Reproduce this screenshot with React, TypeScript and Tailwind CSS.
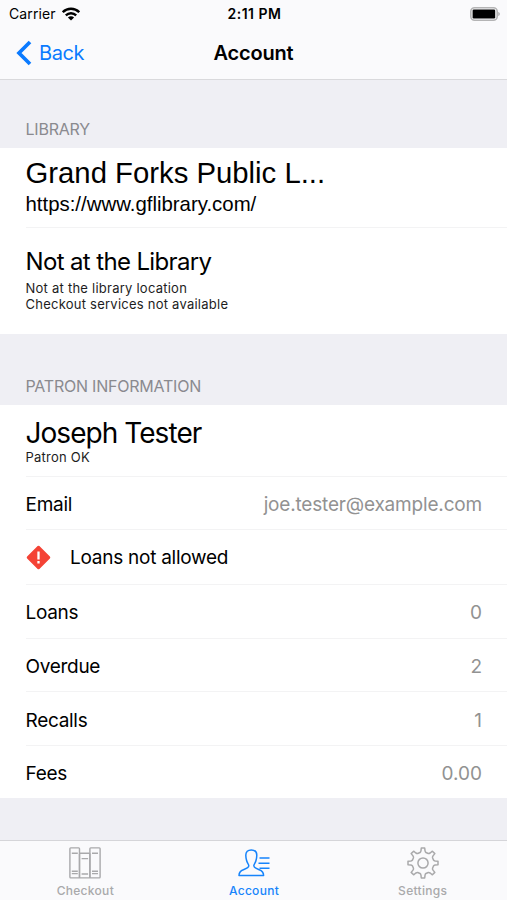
import type { ReactNode } from "react"

const counts = [
  { label: "Loans", value: "0", className: "h-[54px] pt-[3px]" },
  { label: "Overdue", value: "2", className: "h-[53px] pt-[5px]" },
  { label: "Recalls", value: "1", className: "h-[54px] pt-[5px]" },
  { label: "Fees", value: "0.00", className: "h-[52px] pt-[5px]" },
]

function WifiIcon() {
  return (
    <svg width="18" height="14" viewBox="0 0 18 14" fill="none" stroke="#000" strokeWidth="2.3">
      <path d="M.8 5.2C5.4.6 12.6.6 17.2 5.2" />
      <path d="M3.8 8.4c2.9-2.9 7.5-2.9 10.4 0" />
      <path d="M9 13.6 5.9 10.5c1.7-1.6 4.5-1.6 6.2 0Z" fill="#000" stroke="none" />
    </svg>
  )
}

function BatteryIcon() {
  return (
    <svg width="30" height="14" viewBox="0 0 30 14">
      <rect x=".8" y=".8" width="26.4" height="12.4" rx="3.8" fill="#fbfbfc" stroke="#b4b4b5" strokeWidth="1.6" />
      <rect x="2.6" y="2.6" width="22.6" height="8.8" rx="1.2" fill="#000" />
      <path d="M28.2 5v4c1.1-.3 1.7-1.1 1.7-2s-.6-1.7-1.7-2Z" fill="#b4b4b5" />
    </svg>
  )
}

function BooksIcon() {
  return (
    <svg width="32" height="32" viewBox="0 0 32 32" fill="none" stroke="currentColor" strokeWidth="1.4">
      <rect x=".9" y=".9" width="9.6" height="30" rx=".8" />
      <rect x="10.5" y="6.3" width="10.4" height="24.6" rx=".8" />
      <rect x="20.9" y=".9" width="10.2" height="30" rx=".8" />
      <path d="M2.8 6.3h6M2.8 24.3h6M2.8 26.6h6M12.6 11.6h6.5M12.6 27h6.5M23 6.3h6M23 24.3h6M23 26.6h6" />
    </svg>
  )
}

function PersonIcon() {
  return (
    <svg width="32" height="32" viewBox="0 0 32 32" fill="none" stroke="currentColor" strokeWidth="1.5">
      <path
        strokeLinejoin="round"
        d="M1 28.6C1 25 2.2 23.8 5.4 22.7C8.8 21.5 10.8 20.8 10.8 18.8C10.8 17 9.2 16.300 8.600 13.500C8.100 11.500 7.800 10 7.800 8.200C7.800 4.800 9.800 2.900 13.300 2.900S18.800 4.800 18.800 8.200C18.800 10 18.500 11.500 18 13.500C17.400 16.300 15.800 17 15.800 18.800C15.800 20.800 17.800 21.500 21.200 22.700C24.400 23.800 25.600 25 25.600 28.600Z"
      />
      <path d="M21.5 11h10M20.5 16.2h11M21.5 21.3h10" />
    </svg>
  )
}

function gearPath() {
  const point = (radius: number, degrees: number) => {
    const a = (degrees * Math.PI) / 180
    return `${(16 + radius * Math.sin(a)).toFixed(2)} ${(16 - radius * Math.cos(a)).toFixed(2)}`
  }
  let d = ""
  for (let i = 0; i < 8; i++) {
    const a = i * 45
    d += `${i === 0 ? "M" : "L"}${point(15.1, a - 6.5)}L${point(15.1, a + 6.5)}`
    d += `L${point(12.3, a + 9.5)}Q${point(11.2, a + 12)} ${point(10.9, a + 16)}`
    d += `L${point(10.9, a + 29)}Q${point(11.2, a + 33)} ${point(12.3, a + 35.5)}`
  }
  return d + "Z"
}

function GearIcon() {
  return (
    <svg width="32" height="32" viewBox="0 0 32 32" fill="none" stroke="currentColor" strokeWidth="1.5" strokeLinejoin="round">
      <path d={gearPath()} />
      <circle cx="16" cy="16" r="5.1" />
    </svg>
  )
}

function Tab({ icon, label, active }: { icon: ReactNode; label: string; active?: boolean }) {
  return (
    <div className={`flex flex-1 flex-col items-center pt-1.5 ${active ? "text-[#1684fb]" : "text-[#a9a9ab]"}`}>
      {icon}
      <span className="mt-1 text-[12px] leading-4 font-medium tracking-[0.3px]">{label}</span>
    </div>
  )
}

export default function App() {
  return (
    <div className="flex h-[900px] w-[507px] flex-col overflow-hidden bg-[#efeff4] font-['Inter',sans-serif] text-black">
      <header className="h-20 border-b border-[#d9d9dc] bg-[#fafafc]">
        <div className="grid h-[27px] grid-cols-3 items-center pr-[7px] pl-[9px]">
          <div className="flex items-center gap-1.5 text-[14px] tracking-[0.1px]">
            <span>Carrier</span>
            <WifiIcon />
          </div>
          <div className="text-center text-[14px] font-semibold tracking-[0.5px]">2:11 PM</div>
          <div className="flex justify-end">
            <BatteryIcon />
          </div>
        </div>
        <div className="grid h-[51px] grid-cols-3 items-center px-4">
          <div className="flex items-center gap-[7px] text-[20px] tracking-[-0.4px] text-[#0a7aff]">
            <svg width="16" height="26" viewBox="0 0 16 26" fill="none" stroke="currentColor" strokeWidth="3.7">
              <path d="M14 2 3 13l11 11" />
            </svg>
            <span>Back</span>
          </div>
          <h1 className="text-center text-[20px] font-semibold tracking-[-0.2px]">Account</h1>
        </div>
      </header>

      <h2 className="flex h-[68px] items-end pb-[7px] pl-[25.5px] text-[16px] tracking-[-0.22px] text-[#8a8a8f]">LIBRARY</h2>
      <section className="h-[186px] bg-white pl-[25.5px]">
        <div className="h-20 border-b border-[#f3f3f4] pt-[9px] font-['Liberation_Sans',sans-serif]">
          <div className="text-[29.3px] leading-8">Grand Forks Public L...</div>
          <div className="text-[20.4px] leading-[30px]">https://www.gflibrary.com/</div>
        </div>
        <div className="pt-[18px]">
          <div className="text-[24px] leading-8 tracking-[-0.64px]">Not at the Library</div>
          <div className="mt-0.5 text-[13px] leading-4 tracking-[0.24px] text-[#1d1d1d]">
            <div>Not at the library location</div>
            <div>Checkout services not available</div>
          </div>
        </div>
      </section>

      <h2 className="flex h-[71px] items-end pb-[7px] pl-[25.5px] text-[16px] tracking-[-0.22px] text-[#8a8a8f]">
        PATRON INFORMATION
      </h2>
      <section className="h-[393px] bg-white pl-[25.5px]">
        <div className="h-[72px] border-b border-[#f3f3f4] pt-3">
          <div className="text-[28px] leading-8 tracking-[-0.95px]">Joseph Tester</div>
          <div className="text-[13px] leading-4 tracking-[0.24px] text-[#1d1d1d]">Patron OK</div>
        </div>
        <div className="flex h-[53px] items-center justify-between border-b border-[#f3f3f4] pt-[5px] pr-[25px] text-[19px]">
          <span className="tracking-[-0.25px]">Email</span>
          <span className="tracking-[-0.18px] text-[#929292]">joe.tester@example.com</span>
        </div>
        <div className="flex h-[55px] items-center border-b border-[#f3f3f4] text-[19px]">
          <svg className="mr-[19.5px]" width="25" height="25" viewBox="0 0 25 25">
            <path d="M12.5 2 23 12.5 12.5 23 2 12.5Z" fill="#f44336" stroke="#f44336" strokeWidth="2.5" strokeLinejoin="round" />
            <path d="M12.5 6.5v8M12.5 16v2.4" stroke="#fff" strokeWidth="2.3" />
          </svg>
          <span className="pt-0.5 tracking-[-0.26px]">Loans not allowed</span>
        </div>
        {counts.map((row) => (
          <div
            key={row.label}
            className={`flex items-center justify-between border-b border-[#f3f3f4] pr-[25px] text-[19px] last:border-0 ${row.className}`}
          >
            <span className="tracking-[-0.3px]">{row.label}</span>
            <span className="text-[#929292]">{row.value}</span>
          </div>
        ))}
      </section>

      <nav className="mt-auto flex h-[60px] border-t border-[#d5d5d9] bg-[#fafafc] pl-px">
        <Tab icon={<BooksIcon />} label="Checkout" />
        <Tab icon={<PersonIcon />} label="Account" active />
        <Tab icon={<GearIcon />} label="Settings" />
      </nav>
    </div>
  )
}
